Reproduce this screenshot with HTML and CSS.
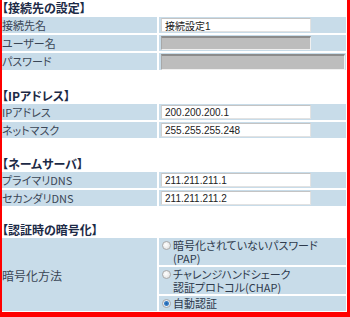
FILE: index.html
```html
<!DOCTYPE html>
<html lang="ja">
<head>
  <meta charset="UTF-8">
  <title>接続先の設定</title>
  <link rel="stylesheet" href="styles.css">
</head>
<body>
  <div class="panel">
    <h2 class="sec first">【接続先の設定】</h2>
    <table class="form">
      <tr><th>接続先名</th><td><input class="txt" type="text" value="接続設定1"></td></tr>
      <tr><th>ユーザー名</th><td><input class="txt off" type="text" disabled></td></tr>
      <tr class="tall"><th>パスワード</th><td><input class="txt wide off" type="password" disabled></td></tr>
    </table>

    <h2 class="sec">【IPアドレス】</h2>
    <table class="form">
      <tr><th>IPアドレス</th><td><input class="txt" type="text" value="200.200.200.1"></td></tr>
      <tr><th>ネットマスク</th><td><input class="txt" type="text" value="255.255.255.248"></td></tr>
    </table>

    <h2 class="sec">【ネームサーバ】</h2>
    <table class="form">
      <tr><th>プライマリDNS</th><td><input class="txt" type="text" value="211.211.211.1"></td></tr>
      <tr><th>セカンダリDNS</th><td><input class="txt" type="text" value="211.211.211.2"></td></tr>
    </table>

    <h2 class="sec last">【認証時の暗号化】</h2>
    <table class="form auth">
      <tr>
        <th rowspan="3">暗号化方法</th>
        <td class="opt two"><label><input type="radio" name="auth"><span>暗号化されていないパスワード<br>(PAP)</span></label></td>
      </tr>
      <tr>
        <td class="opt two"><label><input type="radio" name="auth"><span>チャレンジハンドシェーク<br>認証プロトコル(CHAP)</span></label></td>
      </tr>
      <tr>
        <td class="opt one"><label><input type="radio" name="auth" checked><span>自動認証</span></label></td>
      </tr>
    </table>
  </div>
</body>
</html>
```

FILE: styles.css
```css
body {
  margin: 0;
  padding: 0;
  background-color: #fff;
  font-family: "Noto Sans CJK JP", "Liberation Sans", sans-serif;
  font-feature-settings: "palt";
  color: #3a4656;
}
.panel {
  width: 350px;
  height: 317px;
  box-sizing: border-box;
  border-left: 2px solid #f00;
  border-right: 3px solid #f00;
  border-bottom: 5px solid #f00;
  overflow: hidden;
}
.sec {
  margin: 0;
  padding-top: 16px;
  height: 16px;
  line-height: 16px;
  font-size: 12px;
  font-weight: bold;
  color: #1c2a46;
}
.sec.first {
  padding-top: 0;
  height: 17px;
  line-height: 15px;
}
.sec.last {
  padding-top: 14px;
}
.form {
  width: 344px;
  border-collapse: separate;
  border-spacing: 0;
}
.form th,
.form td {
  background-color: #c8dce9;
  border-bottom: 2px solid #fff;
  padding: 0;
  height: 16px;
  font-size: 11px;
  line-height: 13px;
}
.form th {
  width: 155px;
  text-align: left;
  font-weight: normal;
  border-right: 2px solid #fff;
}
.form td {
  padding-left: 2px;
}
.form tr.tall td,
.form tr.tall th {
  height: 17px;
}
.txt {
  display: block;
  box-sizing: border-box;
  width: 150px;
  height: 14px;
  margin: 0;
  padding: 0 3px;
  font-family: "Liberation Sans", "Noto Sans CJK JP", sans-serif;
  font-size: 10px;
  color: #222;
  background-color: #fff;
  border: 1px solid #e2e2e2;
  border-top-color: #c4c4c4;
  border-left-color: #d0d0d0;
}
.txt.off {
  background-color: #bdbdbd;
  border: 1px solid #f0f0f0;
  border-top: 2px solid #8c8c8c;
  border-left-color: #a8a8a8;
}
.txt.wide {
  width: 184px;
  height: 16px;
}
.auth th {
  font-size: 12px;
  vertical-align: middle;
  padding-top: 2px;
}
.auth .opt {
  padding-left: 3px;
}
.auth .opt.two {
  height: 27px;
  vertical-align: middle;
}
.auth .opt.one {
  height: 15px;
  vertical-align: middle;
}
.opt label {
  display: flex;
  align-items: flex-start;
  gap: 2px;
  font-size: 11px;
  line-height: 13px;
  color: #2e3a4c;
}
.opt input {
  appearance: none;
  -webkit-appearance: none;
  width: 9px;
  height: 9px;
  margin: 2px 0 0 0;
  flex: none;
  border: 1px solid #a9a9a9;
  border-radius: 50%;
  background: radial-gradient(circle at 40% 40%, #fff 0, #e6e6e6 70%);
}
.opt input:checked {
  background: radial-gradient(circle, #1d5fa8 0, #3d82c8 2px, #e8eef4 3px);
}
```
